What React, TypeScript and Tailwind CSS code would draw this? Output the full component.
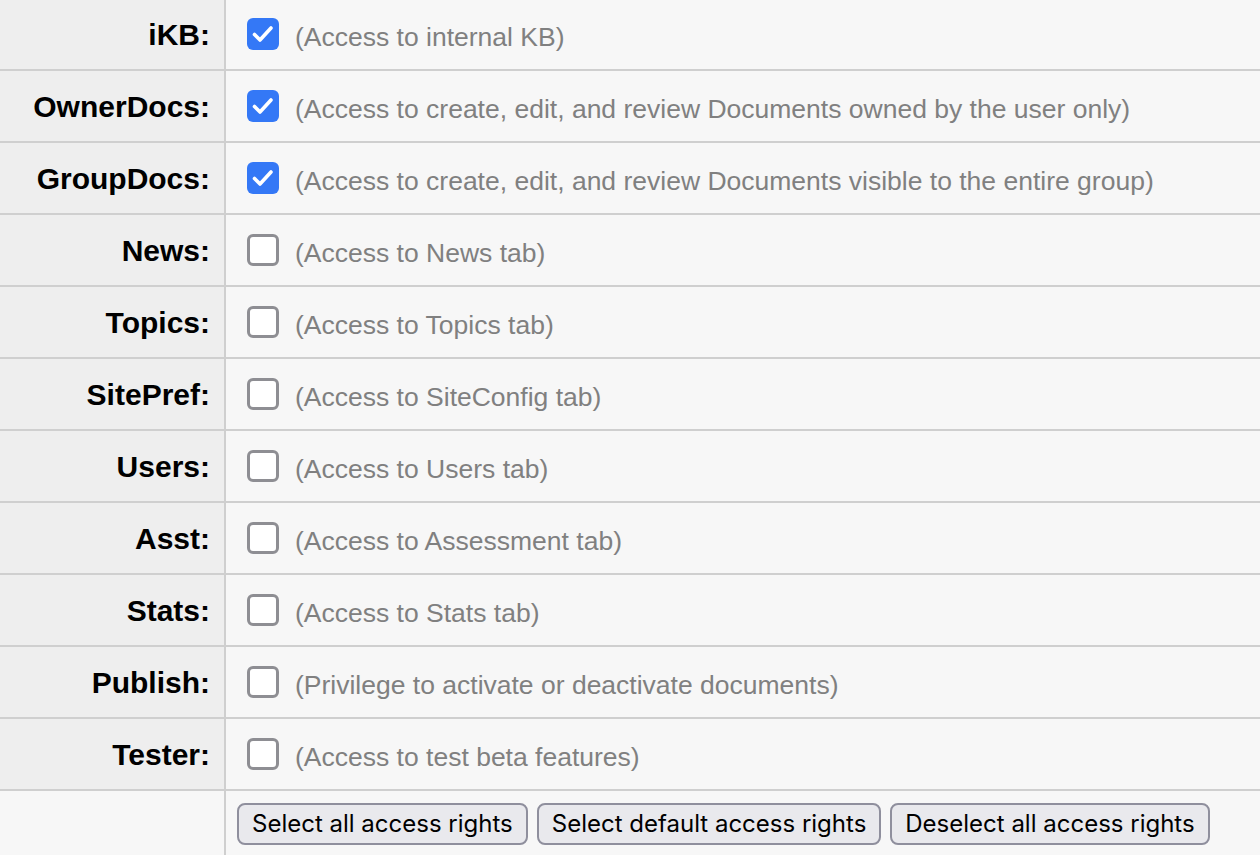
const rows: [string, string, boolean][] = [
  ["iKB", "(Access to internal KB)", true],
  ["OwnerDocs", "(Access to create, edit, and review Documents owned by the user only)", true],
  ["GroupDocs", "(Access to create, edit, and review Documents visible to the entire group)", true],
  ["News", "(Access to News tab)", false],
  ["Topics", "(Access to Topics tab)", false],
  ["SitePref", "(Access to SiteConfig tab)", false],
  ["Users", "(Access to Users tab)", false],
  ["Asst", "(Access to Assessment tab)", false],
  ["Stats", "(Access to Stats tab)", false],
  ["Publish", "(Privilege to activate or deactivate documents)", false],
  ["Tester", "(Access to test beta features)", false],
];

function Box({ on }: { on: boolean }) {
  if (on)
    return (
      <div className="w-[32px] h-[32px] rounded-[6px] bg-[#3478f6] flex items-center justify-center shrink-0">
        <svg width="32" height="32" viewBox="0 0 32 32">
          <path d="M7.5 16.5l5.5 5.5L24 10" stroke="white" strokeWidth="3.6" fill="none" strokeLinecap="round" strokeLinejoin="round" />
        </svg>
      </div>
    );
  return <div className="w-[32px] h-[32px] rounded-[6px] border-[3px] border-[#8e8e93] bg-white shrink-0" />;
}

export default function App() {
  return (
    <div className="w-[1260px] h-[856px] overflow-hidden bg-[#f7f7f7] -mt-px" style={{ fontFamily: "Arial, 'Liberation Sans', sans-serif" }}>
      {rows.map(([name, desc, on]) => (
        <div key={name} className="flex h-[72px] border-b-2 border-[#cfcfcf]">
          <div className="w-[226px] shrink-0 bg-[#eeeeee] border-r-2 border-[#cfcfcf] flex justify-end items-start pt-[13px] pr-[14px] text-[30px] font-bold text-black">
            {name}:
          </div>
          <div className="flex items-start pt-[19px] pl-[21px] gap-[16px]">
            <Box on={on} />
            <span className="text-[26.5px] text-[#808080] leading-[32px] mt-[3px]">{desc}</span>
          </div>
        </div>
      ))}
      <div className="flex h-[67px]">
        <div className="w-[226px] shrink-0 border-r-2 border-[#cfcfcf]" />
        <div className="flex items-start pt-[12px] pl-[11px] gap-[9px]">
          {["Select all access rights", "Select default access rights", "Deselect all access rights"].map((t) => (
            <button key={t} className="h-[42px] px-[13px] rounded-[8px] border-2 border-[#8f8f9d] bg-[#e9e9ed] text-[24px] text-black" style={{ fontFamily: "Inter, sans-serif" }}>
              {t}
            </button>
          ))}
        </div>
      </div>
    </div>
  );
}
